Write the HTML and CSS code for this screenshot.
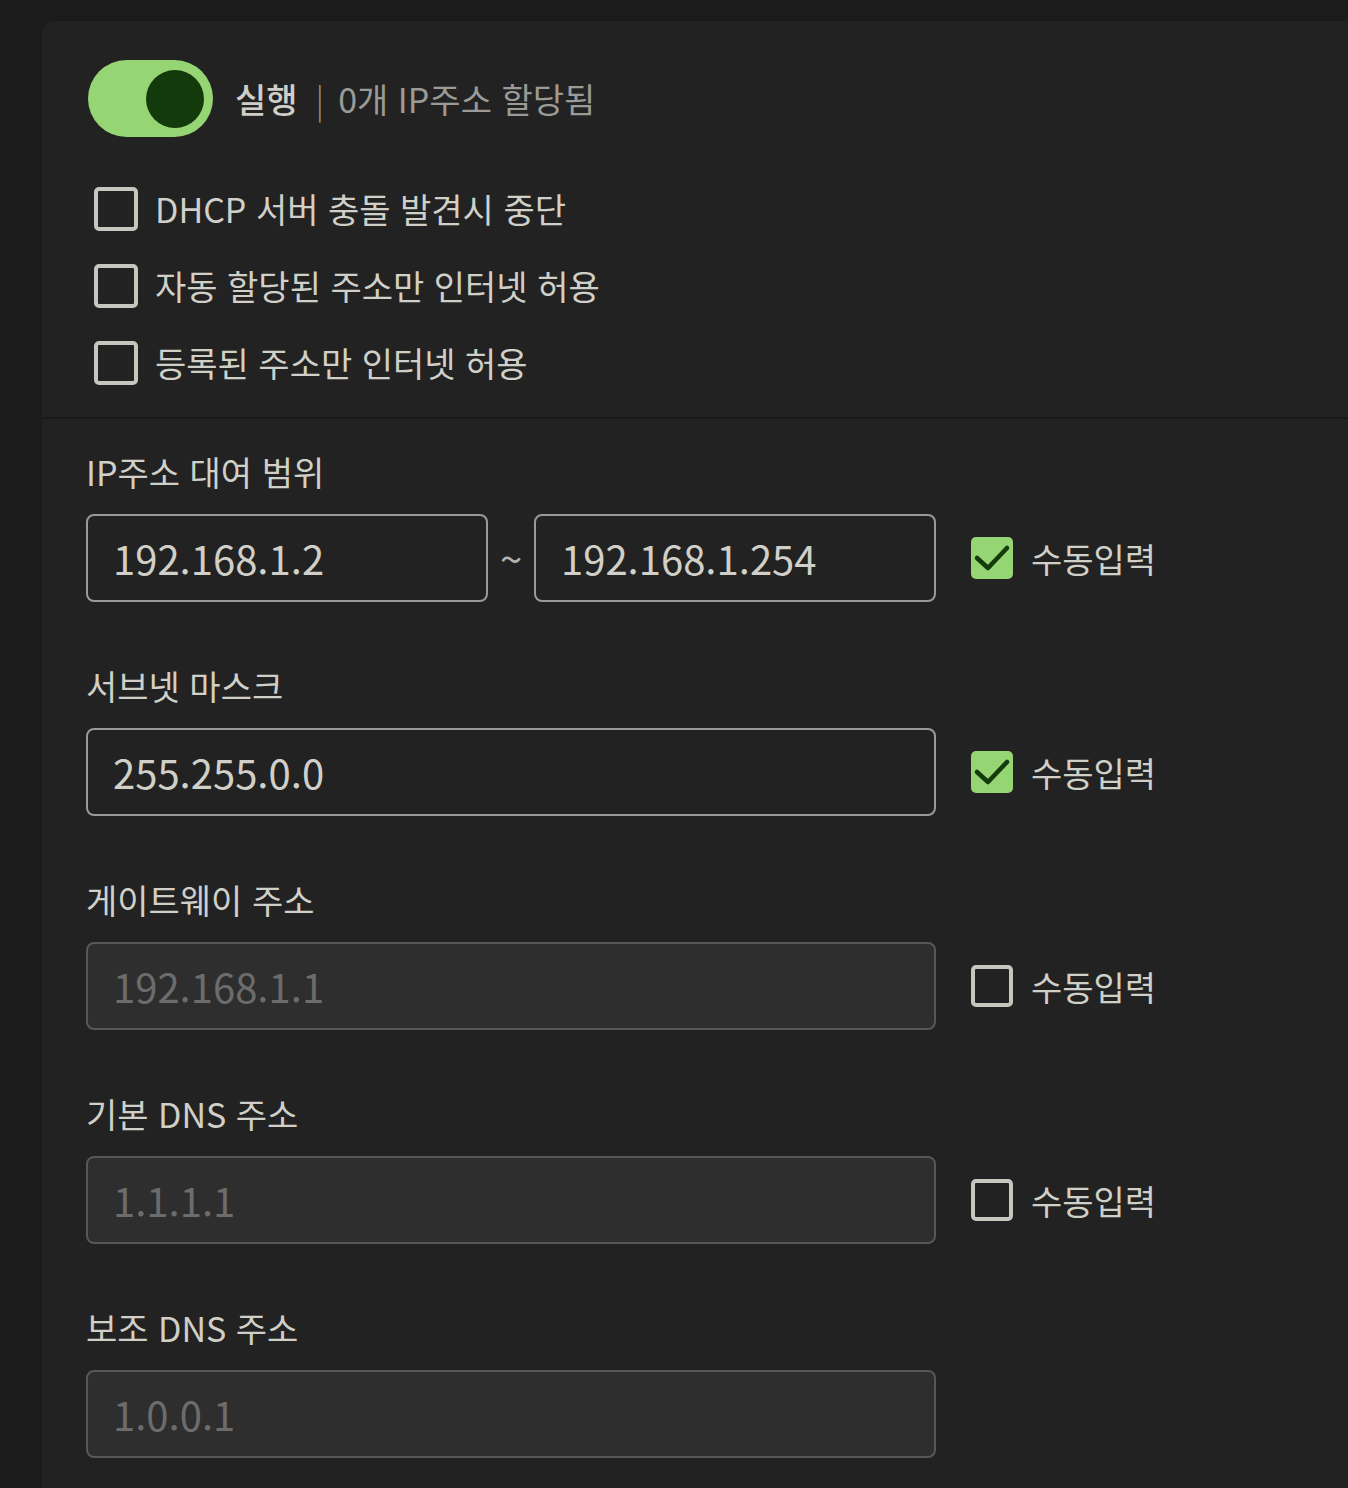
FILE: index.html
```html
<!DOCTYPE html>
<html lang="ko">
<head>
<meta charset="utf-8">
<link rel="stylesheet" href="styles.css">
</head>
<body>
<div class="card">
  <section class="top">
    <div class="status-row">
      <div class="toggle"><span class="knob"></span></div>
      <div class="status-text">
        <span class="status-main">실행</span>
        <span class="sep">|</span>
        <span class="status-sub">0개 IP주소 할당됨</span>
      </div>
    </div>
    <ul class="options">
      <li class="opt"><span class="cb"></span><span>DHCP 서버 충돌 발견시 중단</span></li>
      <li class="opt"><span class="cb"></span><span>자동 할당된 주소만 인터넷 허용</span></li>
      <li class="opt"><span class="cb"></span><span>등록된 주소만 인터넷 허용</span></li>
    </ul>
  </section>
  <div class="divider"></div>
  <section class="form">
    <div class="field">
      <div class="label">IP주소 대여 범위</div>
      <div class="row">
        <div class="inputs range">
          <div class="input">192.168.1.2</div>
          <span class="tilde">~</span>
          <div class="input">192.168.1.254</div>
        </div>
        <div class="manual"><span class="cb on"><svg viewBox="0 0 42 42"><path d="M6 21 L17 31 L36 11"/></svg></span><span>수동입력</span></div>
      </div>
    </div>
    <div class="field">
      <div class="label">서브넷 마스크</div>
      <div class="row">
        <div class="inputs"><div class="input">255.255.0.0</div></div>
        <div class="manual"><span class="cb on"><svg viewBox="0 0 42 42"><path d="M6 21 L17 31 L36 11"/></svg></span><span>수동입력</span></div>
      </div>
    </div>
    <div class="field">
      <div class="label">게이트웨이 주소</div>
      <div class="row">
        <div class="inputs"><div class="input disabled">192.168.1.1</div></div>
        <div class="manual"><span class="cb sm"></span><span>수동입력</span></div>
      </div>
    </div>
    <div class="field">
      <div class="label">기본 DNS 주소</div>
      <div class="row">
        <div class="inputs"><div class="input disabled">1.1.1.1</div></div>
        <div class="manual"><span class="cb sm"></span><span>수동입력</span></div>
      </div>
    </div>
    <div class="field">
      <div class="label">보조 DNS 주소</div>
      <div class="row">
        <div class="inputs"><div class="input disabled">1.0.0.1</div></div>
      </div>
    </div>
  </section>
</div>
</body>
</html>
```

FILE: styles.css
```css
* { box-sizing: border-box; }
html, body {
  margin: 0;
  padding: 0;
  background: #1b1b1b;
  height: 1488px;
  overflow: hidden;
}
body {
  font-family: "Noto Sans CJK KR", "Noto Sans", sans-serif;
  color: #d0d0c9;
  padding: 21px 0 0 42px;
}
.card {
  background: #222222;
  border-top-left-radius: 12px;
  min-height: 1500px;
}
.top {
  padding: 39px 46px 16px 46px;
}
.status-row {
  display: flex;
  align-items: center;
  height: 77px;
}
.toggle {
  width: 125px;
  height: 77px;
  border-radius: 39px;
  background: #95d574;
  display: flex;
  align-items: center;
  justify-content: flex-end;
  padding-right: 9px;
}
.knob {
  width: 58px;
  height: 58px;
  border-radius: 50%;
  background: #133a0a;
}
.status-text {
  margin-left: 22px;
  font-size: 34px;
  display: flex;
  align-items: center;
}
.status-main { color: #cfcfc8; font-weight: 500; }
.sep { color: #8c8c8a; margin: 0 14px 0 18px; font-weight: 300; }
.status-sub { color: #9a9a97; }
.options {
  list-style: none;
  margin: 33px 0 0 0;
  padding: 0;
}
.opt {
  height: 77px;
  display: flex;
  align-items: center;
  font-size: 34px;
  color: #d0d0c9;
}
.opt .cb { margin-left: 6px; margin-right: 17px; }
.cb {
  width: 44px;
  height: 44px;
  border: 4px solid #c6c6be;
  border-radius: 5px;
  display: inline-block;
  flex: none;
}
.cb.sm { width: 42px; height: 42px; }
.cb.on {
  width: 42px;
  height: 42px;
  border: none;
  background: #95d574;
}
.cb.on svg { width: 42px; height: 42px; display: block; }
.cb.on path { fill: none; stroke: #143b0b; stroke-width: 4.5; stroke-linecap: round; stroke-linejoin: round; }
.divider {
  height: 2px;
  background: #191919;
}
.form {
  padding: 33px 0 0 44px;
}
.field + .field { margin-top: 64px; }
.label {
  font-size: 34px;
  line-height: 40px;
  color: #d0d0c9;
}
.row {
  margin-top: 22px;
  display: flex;
  align-items: center;
}
.inputs {
  width: 850px;
  display: flex;
  align-items: center;
}
.input {
  flex: 1;
  height: 88px;
  border: 2px solid #9a9a96;
  border-radius: 8px;
  padding-left: 25px;
  display: flex;
  align-items: center;
  font-size: 40px;
  color: #d0d0c9;
}
.input.disabled {
  background: #2e2e2e;
  border-color: #575757;
  color: #6c6c6c;
}
.range .input { flex: none; width: 402px; }
.tilde {
  width: 46px;
  text-align: center;
  font-size: 40px;
  line-height: 1;
  color: #b4b4ae;
}
.manual {
  margin-left: 35px;
  display: flex;
  align-items: center;
  font-size: 34px;
  color: #d0d0c9;
}
.manual .cb { margin-right: 18px; }
```
